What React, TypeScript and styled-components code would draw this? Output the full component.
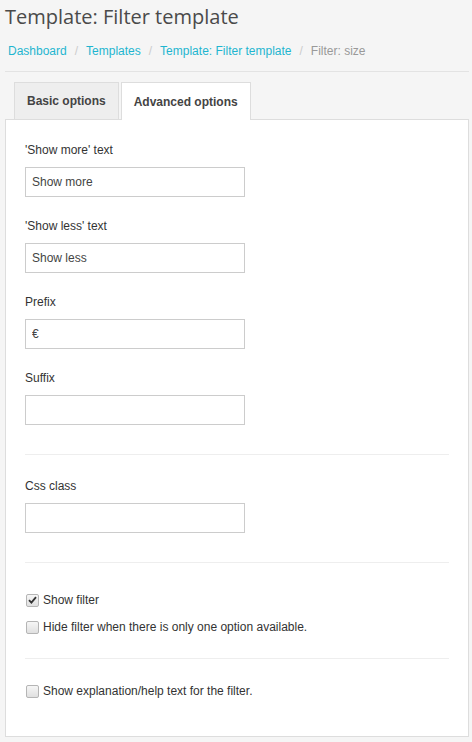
import React from "react";
import styled, { createGlobalStyle } from "styled-components";

const GlobalStyle = createGlobalStyle`
  html, body {
    margin: 0;
    padding: 0;
    background: #f5f5f5;
  }
  body {
    font-family: "Liberation Sans", Arial, sans-serif;
    font-size: 12px;
    color: #333;
  }
`;

const Page = styled.div`
  width: 472px;
  padding: 0 3px 0 5px;
  box-sizing: border-box;
`;

const Title = styled.h1`
  margin: 0;
  padding-top: 3px;
  font-family: "Open Sans", sans-serif;
  font-weight: 400;
  font-size: 20px;
  line-height: 27px;
  color: #4a4a4a;
`;

const Crumbs = styled.ol`
  display: flex;
  list-style: none;
  margin: 0;
  padding: 13px 0 12px 3px;
  font-size: 12px;
  line-height: 16px;
  border-bottom: 1px solid #e3e3e3;
`;

const Crumb = styled.li<{ $active?: boolean }>`
  color: ${(p) => (p.$active ? "#999" : "#1fb5d0")};
  &:not(:first-child)::before {
    content: "/";
    color: #ccc;
    padding: 0 8px;
  }
`;

const Tabs = styled.div`
  display: flex;
  gap: 2px;
  margin-top: 10px;
  padding-left: 9px;
`;

const Tab = styled.div<{ $active?: boolean }>`
  padding: 0 12px;
  display: flex;
  align-items: center;
  font-weight: bold;
  font-size: 12px;
  color: #444;
  border: 1px solid #ddd;
  border-bottom: none;
  background: ${(p) => (p.$active ? "#fff" : "#eee")};
  margin-bottom: ${(p) => (p.$active ? "-1px" : "0")};
  height: ${(p) => (p.$active ? "38px" : "37px")};
  position: relative;
  box-sizing: border-box;
`;

const Panel = styled.div`
  display: flex;
  flex-direction: column;
  background: #fff;
  border: 1px solid #ddd;
  padding: 21px 19px 23px 19px;
  width: 464px;
  box-sizing: border-box;
`;

const Field = styled.div`
  margin-bottom: 20px;
`;

const Label = styled.label`
  display: block;
  line-height: 18px;
  margin-bottom: 8px;
  color: #333;
`;

const Input = styled.input`
  display: block;
  width: 220px;
  height: 30px;
  box-sizing: border-box;
  border: 1px solid #ccc;
  padding: 0 6px;
  font-family: "Liberation Sans", Arial, sans-serif;
  font-size: 12px;
  color: #444;
  background: #fff;
  outline: none;
`;

const Divider = styled.hr`
  width: 100%;
  border: none;
  border-top: 1px solid #eee;
  margin: 9px 0 22px;
`;

const CheckRow = styled.label`
  display: flex;
  align-items: center;
  gap: 4px;
  line-height: 18px;
  margin-bottom: 9px;
  color: #333;
`;

const Box = styled.span`
  width: 13px;
  height: 13px;
  box-sizing: border-box;
  border: 1px solid #b5b5b5;
  border-radius: 2px;
  background: linear-gradient(#f6f6f6, #e0e0e0);
  display: flex;
  align-items: center;
  justify-content: center;
  margin-left: 1px;
`;

const CheckGroup = styled.div<{ $tight?: boolean }>`
  padding-top: ${(p) => (p.$tight ? "1px" : "6px")};
  padding-bottom: 4px;
`;

function Check({ checked, children }: { checked?: boolean; children: React.ReactNode }) {
  return (
    <CheckRow>
      <Box>
        {checked && (
          <svg width="9" height="8" viewBox="0 0 9 8">
            <path d="M1 4.2 L3.4 6.6 L8 1.2" fill="none" stroke="#333" strokeWidth="1.8" />
          </svg>
        )}
      </Box>
      {children}
    </CheckRow>
  );
}

export default function App() {
  return (
    <Page>
      <GlobalStyle />
      <Title>Template: Filter template</Title>
      <Crumbs>
        <Crumb>Dashboard</Crumb>
        <Crumb>Templates</Crumb>
        <Crumb>Template: Filter template</Crumb>
        <Crumb $active>Filter: size</Crumb>
      </Crumbs>
      <Tabs>
        <Tab>Basic options</Tab>
        <Tab $active>Advanced options</Tab>
      </Tabs>
      <Panel>
        <Field>
          <Label>'Show more' text</Label>
          <Input defaultValue="Show more" />
        </Field>
        <Field>
          <Label>'Show less' text</Label>
          <Input defaultValue="Show less" />
        </Field>
        <Field>
          <Label>Prefix</Label>
          <Input defaultValue="€" />
        </Field>
        <Field>
          <Label>Suffix</Label>
          <Input />
        </Field>
        <Divider />
        <Field>
          <Label>Css class</Label>
          <Input />
        </Field>
        <Divider />
        <CheckGroup>
          <Check checked>Show filter</Check>
          <Check>Hide filter when there is only one option available.</Check>
        </CheckGroup>
        <Divider />
        <CheckGroup $tight>
          <Check>Show explanation/help text for the filter.</Check>
        </CheckGroup>
      </Panel>
    </Page>
  );
}
